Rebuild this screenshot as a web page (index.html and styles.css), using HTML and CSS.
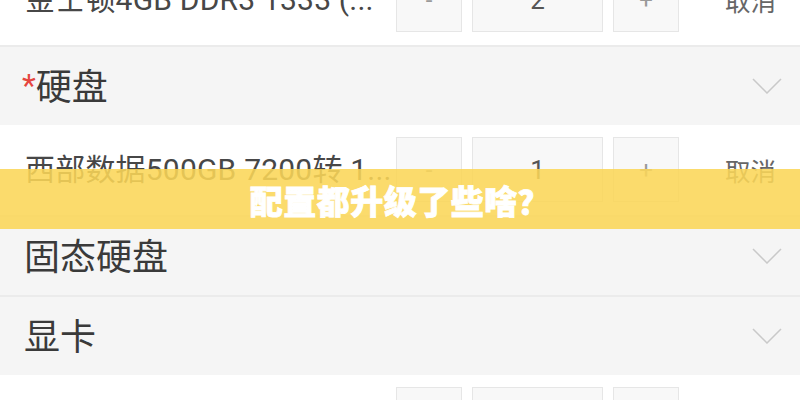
FILE: index.html
```html
<!DOCTYPE html>
<html lang="zh">
<head>
<meta charset="utf-8">
<link rel="stylesheet" href="styles.css">
</head>
<body>
<div class="page">
  <div class="item">
    <div class="name">金士顿4GB DDR3 1333 (...</div>
    <div class="btn">-</div>
    <div class="qty">2</div>
    <div class="btn">+</div>
    <div class="cancel">取消</div>
  </div>
  <div class="section">
    <span class="title"><span class="req">*</span>硬盘</span>
    <svg class="chev" width="30" height="16" viewBox="0 0 30 16"><polyline points="1,1 15,15 29,1" fill="none" stroke="#c9c9c9" stroke-width="1.5"/></svg>
  </div>
  <div class="item">
    <div class="name">西部数据500GB 7200转 1...</div>
    <div class="btn">-</div>
    <div class="qty">1</div>
    <div class="btn">+</div>
    <div class="cancel">取消</div>
  </div>
  <div class="section">
    <span class="title">固态硬盘</span>
    <svg class="chev" width="30" height="16" viewBox="0 0 30 16"><polyline points="1,1 15,15 29,1" fill="none" stroke="#c9c9c9" stroke-width="1.5"/></svg>
  </div>
  <div class="section">
    <span class="title">显卡</span>
    <svg class="chev" width="30" height="16" viewBox="0 0 30 16"><polyline points="1,1 15,15 29,1" fill="none" stroke="#c9c9c9" stroke-width="1.5"/></svg>
  </div>
  <div class="item">
    <div class="name"></div>
    <div class="btn"></div>
    <div class="qty"></div>
    <div class="btn"></div>
    <div class="cancel"></div>
  </div>
</div>
<div class="banner">配置都升级了些啥<span class="q">？</span></div>
</body>
</html>
```
FILE: styles.css
```css
html, body {
  margin: 0;
  padding: 0;
  background: #ffffff;
  overflow: hidden;
  width: 800px;
  height: 400px;
}
body {
  font-family: Roboto, "Noto Sans CJK SC", sans-serif;
  position: relative;
}
.page {
  margin-top: -45px;
  display: flex;
  flex-direction: column;
}
.item {
  height: 90px;
  box-sizing: border-box;
  padding: 12px 0 13px 25px;
  display: flex;
  align-items: center;
  background: #ffffff;
}
.name {
  flex: 0 0 371px;
  font-size: 30px;
  letter-spacing: 0.2px;
  color: #474747;
  white-space: nowrap;
  overflow: hidden;
  line-height: 65px;
}
.btn, .qty {
  height: 65px;
  box-sizing: border-box;
  border: 1px solid #e6e6e6;
  background: #f8f8f8;
  display: flex;
  align-items: center;
  justify-content: center;
  margin-right: 10px;
}
.btn {
  width: 66px;
  font-size: 24px;
  color: #9a9a9a;
}
.qty {
  width: 131px;
  font-size: 26px;
  color: #555555;
}
.cancel {
  margin-left: 36px;
  font-size: 25.5px;
  color: #666666;
}
.section {
  height: 80px;
  box-sizing: border-box;
  border-top: 2px solid #ebebeb;
  background: #f5f5f5;
  display: flex;
  align-items: center;
  justify-content: space-between;
  padding: 0 18px 0 24px;
}
.title {
  font-size: 36px;
  color: #3a3a3a;
  margin-top: -4px;
}
.req {
  color: #e5463f;
  font-size: 32px;
  vertical-align: 4px;
  margin-left: -2px;
}
.chev {
  display: block;
}
.banner {
  position: absolute;
  left: 0;
  top: 169px;
  width: 800px;
  height: 60px;
  background: rgba(250, 214, 88, 0.88);
  display: flex;
  align-items: center;
  justify-content: center;
  color: #ffffff;
  font-family: "Noto Sans CJK SC", sans-serif;
  font-weight: 900;
  font-size: 33px;
  letter-spacing: 0.5px;
  -webkit-text-stroke: 0.8px #ffffff;
  padding-top: 2px;
  box-sizing: border-box;
}
.q {
  font-size: 32px;
}
```
